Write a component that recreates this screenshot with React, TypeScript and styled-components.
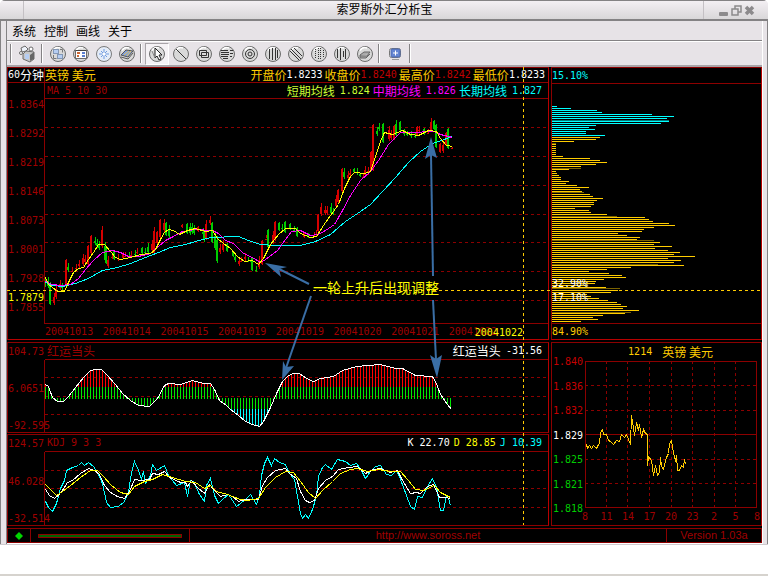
import React from "react";
import styled, { createGlobalStyle } from "styled-components";

const RED = "#8c0000";
const BRIGHT = "#b80000";
const DIM_TEXT = "#a00000";
const GOLD = "#ffcc00";
const YELLOW = "#ffff00";
const CYAN = "#00ffff";
const GREEN = "#00cc00";
const STEEL = "#3a6ea5";
const FACE = "#e7e3e7";

const GlobalStyle = createGlobalStyle`
  *, *::before, *::after { box-sizing: border-box; }
  body {
    margin: 0;
    background: #fff;
    font-family: "Noto Sans CJK SC", sans-serif;
    font-size: 12px;
    line-height: 14px;
  }
`;

/* ---------- window ---------- */

const Page = styled.div`
  min-height: 100vh;
  background: #fff;
  border-bottom: 2px solid #d6d3ce;
`;

const AppWindow = styled.div`
  display: flex;
  flex-direction: column;
  background: ${FACE};
  border-radius: 5px 5px 0 0;
  overflow: hidden;
  border-bottom: 1px solid #cfcbcf;
`;

const TitleBar = styled.header`
  display: flex;
  align-items: stretch;
  height: 21px;
  border-top: 1px solid #848284;
  border-bottom: 2px solid #848284;
  background: linear-gradient(#f3eff3, #d9d7d9);
`;

const TitleEdge = styled.div<{ $side: "left" | "right" }>`
  display: flex;
  align-items: center;
  width: ${(p) => (p.$side === "left" ? 24 : 65)}px;
  padding-left: ${(p) => (p.$side === "left" ? 0 : 14)}px;
  gap: 2px;
  border-${(p) => (p.$side === "left" ? "right" : "left")}: 1px solid #c4c0c4;
`;

const Title = styled.h1`
  flex: 1;
  margin: 0;
  padding-left: 42px;
  font-size: 12px;
  font-weight: 400;
  line-height: 16px;
  text-align: center;
  color: #000;
`;

const WindowButton = styled.button`
  width: 11px;
  height: 12px;
  padding: 0;
  border: 0;
  background: none;
  svg { display: block; }
`;

const Frame = styled.div`
  border: solid #848284;
  border-width: 0 1px;
  padding: 0 4px 0 5px;
`;

const Client = styled.div`
  border-left: 1px solid #848284;
  border-right: 1px solid #fff;
`;

const MenuBar = styled.nav`
  display: flex;
  align-items: center;
  gap: 8px;
  height: 20px;
  padding-left: 5px;
  border-bottom: 1px solid #848284;
`;

const MenuItem = styled.button`
  padding: 0;
  border: 0;
  background: none;
  font: inherit;
  line-height: 18px;
  color: #000;
`;

const ToolBar = styled.div`
  display: flex;
  align-items: center;
  height: 26px;
  padding-left: 1px;
  border-top: 1px solid #fff;
  border-bottom: 2px solid #a8a4a8;
`;

const ToolSeparator = styled.div`
  width: 2px;
  height: 19px;
  margin: 0 3px 0 2px;
  background: #848284;
  border-right: 1px solid #fff;
`;

const ToolButton = styled.button<{ $pressed?: boolean; $wide?: boolean }>`
  display: flex;
  align-items: center;
  justify-content: center;
  width: ${(p) => (p.$wide ? 24 : 23)}px;
  height: 22px;
  padding: 0;
  border: 1px solid;
  border-color: ${(p) => (p.$pressed ? "#a8a4a8 #fff #fff #a8a4a8" : "transparent")};
  background: ${(p) => (p.$pressed ? "#f5f2f5" : "none")};
`;

/* ---------- workspace ---------- */

const Workspace = styled.main`
  background: #000;
  border-bottom: 1px solid #fff;
`;

const Panes = styled.div`
  position: relative;
  display: grid;
  grid-template-columns: minmax(0, 542fr) minmax(0, 211fr);
  gap: 2px;
  align-items: stretch;
`;

const Column = styled.div`
  display: flex;
  flex-direction: column;
  min-width: 0;
`;

const Panel = styled.section<{ $gap?: number; $edge?: string }>`
  position: relative;
  display: flex;
  flex-direction: column;
  margin-top: ${(p) => p.$gap ?? 0}px;
  border: 1px solid ${RED};
  border-right-color: ${BRIGHT};
  border-bottom-color: ${(p) => p.$edge ?? RED};
`;

const Num = styled.span<{ $c?: string }>`
  font-family: "DejaVu Sans Mono", "Liberation Mono", monospace;
  font-size: 10px;
  line-height: 12px;
  white-space: pre;
  color: ${(p) => p.$c ?? DIM_TEXT};
`;

const Cn = styled.span<{ $c?: string }>`
  font-size: 12px;
  line-height: 14px;
  white-space: pre;
  color: ${(p) => p.$c ?? DIM_TEXT};
`;

const HeaderRow = styled.div`
  display: grid;
  grid-template-columns: 37px minmax(0, 1fr);
  height: 15px;
  border-bottom: 1px solid ${RED};
`;

const Period = styled.div`
  display: flex;
  align-items: center;
  border-right: 1px solid ${RED};
`;

const Split = styled.div<{ $h?: number; $line?: boolean; $left?: number; $right?: number }>`
  display: flex;
  align-items: center;
  justify-content: space-between;
  height: ${(p) => p.$h ?? 14}px;
  padding: 0 ${(p) => p.$right ?? 6}px 0 ${(p) => p.$left ?? 2}px;
  border-bottom: ${(p) => (p.$line ? `1px solid ${RED}` : "0")};
`;

const Readings = styled.div<{ $gap: number }>`
  display: flex;
  align-items: center;
  gap: ${(p) => p.$gap}px;
`;

const Reading = styled.span<{ $gap?: number }>`
  display: flex;
  align-items: center;
  gap: ${(p) => p.$gap ?? 0}px;
`;

const PlotBody = styled.div`
  display: grid;
  grid-template-columns: 36px minmax(0, 1fr);
`;

const Axis = styled.div<{ $top: number; $bottom: number }>`
  display: flex;
  flex-direction: column;
  justify-content: space-between;
  padding: ${(p) => p.$top}px 0 ${(p) => p.$bottom}px;
`;

const PlotArea = styled.div<{ $full?: boolean }>`
  min-width: 0;
  padding-left: ${(p) => (p.$full ? 0 : 1)}px;
  border-left: ${(p) => (p.$full ? `1px solid ${RED}` : "0")};
`;

const PlotFrame = styled.div<{ $full?: boolean; $closed?: boolean }>`
  margin-left: ${(p) => (p.$full ? 0 : -1)}px;
  border-left: ${(p) => (p.$full ? "0" : `1px solid ${RED}`)};
  border-bottom: ${(p) => (p.$closed ? `1px solid ${RED}` : "0")};
`;

const Plot = styled.svg<{ $h: number }>`
  display: block;
  width: 100%;
  height: ${(p) => p.$h}px;
`;

const Dates = styled.div`
  display: flex;
  align-items: center;
  justify-content: space-between;
  height: 15px;
  margin: 0 51px 0 37px;
`;

const CursorPrice = styled.div`
  position: absolute;
  left: 0;
  bottom: 35px;
  line-height: 12px;
`;

const CursorDate = styled.div`
  position: absolute;
  right: 25px;
  bottom: 0;
  height: 15px;
  line-height: 14px;
`;

const ShareRow = styled.div<{ $line?: boolean }>`
  display: flex;
  align-items: center;
  height: ${(p) => (p.$line ? 16 : 15)}px;
  border-bottom: ${(p) => (p.$line ? `1px solid ${RED}` : "0")};
`;

const ShareSplit = styled.div`
  position: absolute;
  left: 0;
  bottom: 35px;
  display: flex;
  flex-direction: column;
  gap: 2px;
`;

const DayTitle = styled.h2`
  display: flex;
  align-items: center;
  justify-content: center;
  gap: 10px;
  height: 18px;
  margin: 0;
  padding-left: 28px;
  font-weight: 400;
`;

const DayBody = styled.div`
  display: grid;
  grid-template-columns: 33px minmax(0, 1fr);
  padding-right: 4px;
`;

const DayAxis = styled.div`
  display: flex;
  flex-direction: column;
  justify-content: space-between;
  margin: -5px 0 -7px;
  padding-left: 1px;
`;

const Hours = styled.div`
  display: flex;
  justify-content: space-between;
  height: 17px;
  margin: 0 -2px 0 27px;
  padding-top: 3px;
`;

const Hour = styled(Num)`
  width: 12px;
  text-align: center;
`;

const Overlay = styled.svg`
  position: absolute;
  inset: 0;
  width: 100%;
  height: 100%;
  pointer-events: none;
`;

const Note = styled.div`
  position: absolute;
  top: 211px;
  left: 306px;
  font-size: 14px;
  line-height: 18px;
  white-space: nowrap;
  color: ${YELLOW};
`;

const StatusBar = styled.footer`
  display: flex;
  align-items: stretch;
  height: 15px;
  margin-top: 2px;
  border: 1px solid ${RED};
`;

const StatusCell = styled.div<{ $w?: number; $last?: boolean }>`
  display: flex;
  align-items: center;
  justify-content: center;
  flex: ${(p) => (p.$w ? `0 0 ${p.$w}px` : "1")};
  padding: 0 7px;
  border-right: ${(p) => (p.$last ? "0" : `1px solid ${RED}`)};
  font-family: "Liberation Sans", sans-serif;
  font-size: 11px;
  line-height: 13px;
  color: ${DIM_TEXT};
`;

const StatusLink = styled.a`
  color: inherit;
  text-decoration: none;
`;

const LoadBar = styled.div`
  width: 100%;
  height: 4px;
  border: 1px solid ${RED};
  background: #006300;
`;

/* ---------- data ---------- */

const shortMa =
  "45,277 48,284 52,287 57,291 64,291 68,282 73,272 78,268 83,267 88,259 93,252 98,244 104,244 110,251 115,257 120,259 130,257 140,254 150,253 155,249 160,239 164,232 168,229 173,230 179,234 187,230 195,228 205,231 212,230 217,238 223,243 230,248 237,256 244,261 252,260 258,264 263,258 270,244 278,234 285,228 295,228 300,233 310,237 316,236 323,225 330,215 338,204 344,188 350,176 354,172 364,173 370,171 375,156 380,141 384,132 392,134 402,130 410,134 418,135 428,130 436,131 440,138 446,145 452,146";
const midMa =
  "45,281 52,284 60,285 70,284 78,278 85,269 93,260 102,252 112,250 120,252 128,256 138,256 150,253 158,246 165,240 173,236 182,231 195,229 212,230 218,233 225,240 233,243 243,253 252,257 260,262 265,259 277,250 285,239 291,231 300,230 310,235 318,234 325,230 334,224 342,210 350,195 360,180 370,171 378,160 388,144 400,132 415,132 428,131 434,131 440,134 452,137";
const longMa =
  "45,282 52,285 62,286 75,283 88,278 102,270 117,267 130,263 145,257 158,252 170,247 185,244 195,241 210,237 238,236 248,240 260,244 275,245 300,245 315,241 330,234 345,221 360,211 370,204 382,191 395,177 408,162 420,151 432,143 441,140 452,136";

// x, high, low, rising (1) or falling (0), body width
type Candle = [number, number, number, number, number];
const candles: Candle[] = [
  [45, 277, 287, 0, 1], [48, 277, 288, 0, 1], [50, 282, 305, 0, 2], [54, 293, 305, 1, 1], [56, 285, 299, 1, 1],
  [60, 280, 290, 1, 1], [62, 283, 290, 0, 1], [66, 259, 287, 1, 2], [68, 263, 272, 0, 1], [72, 267, 272, 1, 1],
  [76, 264, 270, 1, 1], [79, 260, 268, 1, 1], [83, 254, 266, 1, 1], [85, 255, 264, 1, 1], [88, 245, 265, 1, 2],
  [91, 235, 254, 1, 2], [95, 237, 245, 0, 1], [97, 239, 248, 0, 1], [99, 241, 250, 0, 1], [102, 226, 248, 1, 1],
  [105, 242, 262, 0, 1], [106, 246, 264, 0, 2], [108, 256, 268, 1, 1], [112, 253, 259, 1, 1], [114, 250, 260, 0, 2],
  [118, 254, 261, 1, 1], [123, 252, 259, 1, 2], [125, 252, 257, 1, 1], [129, 252, 257, 0, 1], [131, 251, 257, 1, 1],
  [135, 250, 256, 0, 1], [137, 248, 254, 1, 1], [142, 247, 254, 0, 2], [145, 248, 255, 0, 1], [148, 243, 254, 0, 1],
  [152, 240, 252, 1, 1], [154, 227, 255, 1, 1], [157, 231, 244, 1, 2], [160, 219, 238, 1, 2], [164, 219, 232, 1, 1],
  [166, 222, 236, 0, 2], [169, 225, 238, 0, 1], [182, 224, 228, 1, 2], [187, 223, 234, 0, 2], [190, 223, 235, 0, 1],
  [192, 223, 234, 0, 1], [194, 225, 235, 0, 1], [198, 226, 232, 1, 2], [203, 228, 236, 0, 1], [204, 230, 242, 0, 1],
  [206, 220, 240, 1, 1], [210, 216, 225, 1, 1], [212, 222, 243, 0, 2], [215, 232, 250, 0, 1], [217, 236, 263, 0, 1],
  [220, 244, 254, 1, 1], [223, 240, 252, 1, 1], [227, 243, 252, 0, 2], [233, 251, 257, 0, 2], [235, 253, 262, 0, 1],
  [239, 257, 266, 1, 1], [241, 257, 262, 1, 1], [245, 253, 261, 1, 1], [248, 257, 262, 0, 1], [251, 257, 264, 0, 1],
  [252, 257, 271, 0, 2], [256, 266, 272, 0, 1], [259, 256, 269, 1, 1], [262, 240, 265, 1, 2], [266, 235, 238, 1, 1],
  [268, 229, 248, 0, 2], [273, 231, 244, 1, 1], [275, 221, 241, 1, 2], [279, 222, 231, 0, 2], [282, 224, 230, 0, 1],
  [285, 221, 233, 0, 2], [290, 223, 230, 0, 2], [294, 226, 232, 0, 1], [297, 227, 237, 0, 2], [304, 232, 238, 1, 2],
  [308, 233, 238, 0, 2], [314, 232, 237, 1, 1], [316, 230, 236, 1, 1], [318, 214, 232, 1, 2], [321, 203, 216, 1, 1],
  [325, 206, 215, 1, 1], [327, 206, 215, 1, 1], [331, 203, 215, 0, 1], [333, 208, 215, 0, 1], [336, 195, 208, 1, 1],
  [338, 189, 203, 1, 2], [342, 168, 192, 1, 2], [344, 168, 179, 0, 1], [348, 171, 180, 1, 1], [350, 169, 177, 1, 1],
  [354, 168, 173, 0, 2], [357, 168, 175, 0, 1], [360, 173, 177, 0, 2], [363, 173, 177, 1, 1], [365, 166, 177, 1, 1],
  [368, 167, 175, 1, 1], [371, 151, 171, 1, 2], [373, 124, 171, 1, 2], [377, 127, 136, 0, 1], [379, 123, 131, 0, 1],
  [383, 123, 143, 0, 2], [389, 126, 141, 1, 1], [391, 130, 140, 1, 1], [394, 125, 140, 1, 2], [396, 120, 137, 0, 1],
  [400, 121, 131, 0, 2], [404, 129, 136, 0, 1], [407, 131, 136, 0, 2], [411, 131, 138, 0, 1], [415, 132, 138, 0, 1],
  [417, 126, 136, 1, 2], [419, 126, 133, 1, 1], [424, 128, 135, 0, 2], [428, 129, 134, 1, 1], [431, 118, 132, 1, 1],
  [434, 120, 130, 0, 2], [436, 124, 148, 0, 2], [440, 143, 153, 1, 2], [443, 141, 153, 1, 1], [446, 132, 146, 1, 2],
  [448, 128, 149, 0, 2], [452, 147, 149, 1, 2],
];

// first row, colour, bar lengths on every second row
const shares: [number, string, number[]][] = [
  [106, CYAN, [6, 20, 46, 51, 101, 123, 116]],
  [120, "#007b7b", [118]],
  [121, CYAN, [118, 110, 45, 38, 44, 35, 35, 54]],
  [137, GOLD, [49, 45, 23]],
  [143, "#7b6300", [5]],
  [144, GOLD, [5, 5, 5, 5, 5, 5, 12, 39, 49, 56, 45, 30]],
  [168, "#7b6300", [30]],
  [169, GOLD, [18, 5, 6, 8, 10, 10, 18, 15, 26, 38, 29, 31]],
  [192, "#7b6300", [33]],
  [194, GOLD, [39, 42, 52, 46, 43, 43, 40, 24, 38, 40, 56]],
  [216, "#7b6300", [66]],
  [217, GOLD, [94, 98, 102, 118, 124, 103, 93, 91, 67, 76, 89, 86]],
  [240, "#7b6300", [103]],
  [242, GOLD, [109, 103, 121, 104, 117, 129, 123, 144, 117, 130, 123]],
  [264, "#7b6300", [107]],
  [265, GOLD, [133, 80, 56, 38, 58, 71, 75, 53, 45, 44, 36, 55]],
  [288, "#7b6300", [69]],
  [290, GOLD, [67, 60, 36, 40, 48, 57, 66, 70, 76, 72, 88]],
  [312, "#7b6300", [80]],
  [313, GOLD, [74, 52, 42, 47, 30]],
];

const luck: [number, number][] = [
  [45, 384], [48, 386], [52, 397], [57, 401], [63, 401], [68, 396], [75, 387], [83, 377], [90, 370], [95, 369],
  [101, 369], [107, 375], [115, 384], [122, 393], [130, 400], [138, 405], [149, 406], [157, 398], [164, 385],
  [168, 383], [180, 384], [192, 380], [203, 383], [210, 383], [214, 389], [219, 400], [226, 405], [230, 409],
  [238, 415], [245, 421], [252, 424], [259, 426], [263, 421], [270, 407], [276, 393], [282, 381], [288, 375],
  [293, 373], [299, 373], [306, 378], [313, 381], [320, 378], [333, 376], [342, 370], [356, 366], [380, 364],
  [395, 368], [402, 368], [415, 375], [432, 376], [436, 383], [440, 394], [447, 404], [451, 409],
];

const kLine =
  "45,489 49,495 54,498 60,493 67,482 72,480 80,473 88,468 94,470 99,474 104,485 110,492 117,496 124,498 129,491 134,479 141,480 149,479 152,473 158,474 164,471 169,477 180,482 185,482 187,486 191,480 197,487 204,493 209,484 214,490 220,496 227,494 232,496 238,501 245,499 258,499 262,485 267,477 275,470 285,468 289,473 296,478 300,491 305,500 309,502 314,500 318,488 325,480 332,476 338,469 348,467 357,466 365,473 373,469 380,468 390,472 397,470 402,480 410,493 416,492 420,493 427,486 433,484 439,497 445,497 450,498";
const dLine =
  "45,484 50,489 56,495 62,491 70,485 80,477 90,470 97,470 103,476 111,485 120,492 128,494 134,486 144,481 152,479 162,474 172,477 185,481 195,482 204,488 210,485 216,491 227,494 240,499 247,500 258,498 265,487 275,477 285,471 293,472 300,481 308,492 315,498 322,490 332,481 340,473 350,469 357,468 367,471 378,469 390,471 400,471 408,480 415,489 423,490 434,485 440,492 450,497";
const jLine =
  "45,501 48,507 52,511 56,503 60,488 64,480 66,470 72,467 78,465 81,462 84,465 88,462 93,466 97,472 102,483 106,502 110,507 118,506 124,501 128,492 131,472 134,461 138,470 141,479 143,471 145,483 150,475 152,464 156,470 164,465 168,475 176,485 184,482 187,496 190,480 193,481 199,494 204,501 206,485 210,478 214,495 218,503 223,498 228,494 236,506 245,499 250,494 256,504 259,495 261,475 264,463 267,457 271,465 274,458 279,462 285,464 289,473 294,479 297,496 300,513 302,518 305,514 308,518 312,509 316,496 318,476 322,467 325,464 331,469 337,459 345,461 350,465 356,463 361,470 365,478 370,471 375,466 380,465 386,474 391,475 396,470 400,479 406,495 410,506 414,509 417,496 422,497 427,486 432,478 436,487 440,510 443,510 446,495 448,498 450,505";
const dayLine =
  "586,444 587,448 589,445 591,448 593,445 596,448 598,444 599,443 600,432 602,429 603,434 606,434 608,440 610,441 613,444 616,440 619,441 621,434 624,437 626,434 628,439 630,444 631,415 632,421 634,435 636,422 638,430 639,424 641,437 643,429 645,433 647,434 647,465 648,456 651,460 653,475 655,465 657,475 659,472 660,457 661,466 663,469 666,457 668,453 669,443 671,440 673,452 675,461 676,455 677,470 679,470 681,465 683,467 684,459 685,464";

/* ---------- chart pieces ---------- */

const HGrid = ({ ys, x1, x2 }: { ys: number[]; x1: number; x2: number }) => (
  <g fill="none" stroke={RED} strokeDasharray="3 3" shapeRendering="crispEdges">
    {ys.map((y) => (
      <path key={y} d={`M${x1} ${y + 0.5}H${x2}`} />
    ))}
  </g>
);

const Curve = ({ points, color }: { points: string; color: string }) => (
  <polyline points={points} transform="translate(0.5 0.5)" fill="none" stroke={color} shapeRendering="crispEdges" />
);

const PricePlot = () => (
  <Plot $h={224} viewBox="45 99 503 224" preserveAspectRatio="none" role="img" aria-label="价格走势">
    <HGrid ys={[127, 156, 185, 214, 242, 271, 300]} x1={45} x2={548} />
    <g shapeRendering="crispEdges">
      {candles.map(([x, hi, lo, up, w]) => (
        <g key={x} fill={up ? "#d60000" : GREEN}>
          <rect x={x} y={hi} width={1} height={lo - hi} />
          <rect x={x - 1} y={w > 1 ? hi + 1 : hi + 4} width={2} height={Math.max(1, lo - hi - (w > 1 ? 2 : 6))} />
        </g>
      ))}
    </g>
    <Curve points={longMa} color={CYAN} />
    <Curve points={midMa} color="#ff00ff" />
    <Curve points={shortMa} color={YELLOW} />
  </Plot>
);

const SharePlot = () => (
  <Plot $h={239} viewBox="552 84 209 239" preserveAspectRatio="none" role="img" aria-label="成交分布">
    <g shapeRendering="crispEdges">
      {shares.map(([top, color, lengths]) =>
        lengths.map((length, i) => (
          <rect key={`${top}-${i}`} x={551} y={top + i * 2} width={length} height={1} fill={color} />
        ))
      )}
    </g>
  </Plot>
);

const levelAt = (x: number) => {
  const i = Math.max(1, luck.findIndex(([px]) => px >= x));
  const [x0, y0] = luck[i - 1];
  const [x1, y1] = luck[i];
  return Math.round(y0 + ((y1 - y0) * (x - x0)) / (x1 - x0));
};

const LuckPlot = () => {
  const xs = Array.from({ length: 136 }, (_, i) => 45 + i * 3);
  return (
    <Plot $h={72} viewBox="45 360 503 72" preserveAspectRatio="none" role="img" aria-label="红运当头">
      <HGrid ys={[377, 396, 414]} x1={45} x2={548} />
      <g shapeRendering="crispEdges">
        {xs.map((x) => {
          const y = levelAt(x);
          const greenTop = y < 398 ? Math.max(y, 387) : 398;
          const greenEnd = y < 398 ? 399 : Math.min(y, 409);
          return (
            <g key={x}>
              {y < 387 && <rect x={x} y={y} width={1} height={387 - y} fill="#ff0000" />}
              <rect x={x} y={greenTop} width={1} height={greenEnd - greenTop} fill="#00e600" />
              {y > 409 && <rect x={x} y={409} width={1} height={y - 409} fill={CYAN} />}
            </g>
          );
        })}
      </g>
      <Curve points={luck.map((p) => p.join(",")).join(" ")} color="#fff" />
    </Plot>
  );
};

const KdjPlot = () => (
  <Plot $h={73} viewBox="45 452 503 73" preserveAspectRatio="none" role="img" aria-label="KDJ">
    <HGrid ys={[470, 488, 507]} x1={45} x2={548} />
    <Curve points={jLine} color={CYAN} />
    <Curve points={kLine} color="#fff" />
    <Curve points={dLine} color={YELLOW} />
  </Plot>
);

const DayPlot = () => (
  <Plot $h={147} viewBox="585 361 172 147" preserveAspectRatio="none" role="img" aria-label="日内走势">
    <HGrid ys={[385, 410, 459, 483]} x1={585} x2={757} />
    <g stroke={RED} fill="none" strokeDasharray="3 3" shapeRendering="crispEdges">
      {[606, 627, 649, 671, 692, 714, 735].map((x) => (
        <path key={x} d={`M${x + 0.5} 361V508`} />
      ))}
    </g>
    <path d="M585.5 361.5H756.5V507.5H585.5ZM585 434.5H757" fill="none" stroke={RED} shapeRendering="crispEdges" />
    <Curve points={dayLine} color={GOLD} />
  </Plot>
);

/* ---------- icons ---------- */

const Disc = ({ children }: { children?: React.ReactNode }) => (
  <svg width="18" height="18" viewBox="0 0 18 18">
    <circle cx="9" cy="9" r="7.5" fill="#d9d9d9" stroke="#6b6b6b" />
    <path d="M4 5.5A6 6 0 0 1 11 3" fill="none" stroke="#fff" strokeWidth="1.5" />
    <g fill="none" stroke="#333">{children}</g>
  </svg>
);

const Camera = () => (
  <svg width="18" height="18" viewBox="0 0 18 18">
    <path d="M5 9l3-3 8 1v7l-4 3-7-3z" fill="#c6c6c6" stroke="#6b6b6b" />
    <path d="M12 10v6l4-2V7z" fill="#666" />
    <path d="M3 3l4-2 3 3-2 2-4 1z" fill="#eef2fa" stroke="#6b6b6b" />
    <rect x="7" y="9" width="4" height="5" fill="#b5cdf2" />
    <circle cx="13" cy="4" r="2" fill="#fff" stroke="#6b6b6b" />
    <circle cx="3" cy="8" r="1.5" fill="#fff" stroke="#6b6b6b" />
  </svg>
);

const Panels = () => (
  <Disc>
    <rect x="4.5" y="4.5" width="5" height="4" fill="#b5cdf2" stroke="#8397b5" />
    <rect x="8.5" y="9.5" width="5" height="4" fill="#b5cdf2" stroke="#8397b5" />
    <path d="M11 4.500h2.500v3M4.500 10v3.500h3" stroke="#777" />
  </Disc>
);

const Calendar = () => (
  <Disc>
    <rect x="3.5" y="5.5" width="11" height="8" fill="#fff" stroke="#6b6b6b" />
    <path d="M4 5.5h10" stroke="#444" />
    <path d="M5 8h3M5 11h2" stroke="#c63" strokeWidth="2" />
    <path d="M10 8h3M10 11h3" stroke="#5b7fd0" strokeWidth="2" />
  </Disc>
);

const Star = () => (
  <svg width="18" height="18" viewBox="0 0 18 18">
    <circle cx="9" cy="9" r="7.5" fill="#e4ecf8" stroke="#7a7a7a" />
    <path d="M9 4v10M4 9h10M6 6l6 6M12 6l-6 6" stroke="#6f9be0" fill="none" />
    <circle cx="9" cy="9" r="1.5" fill="#fff" />
  </svg>
);

const Book = () => (
  <Disc>
    <path d="M3 10l5-5 7 1-5 6z" fill="#7f9fdc" stroke="#555" />
    <path d="M3 12l7 2 5-6" fill="none" stroke="#555" />
    <path d="M6 10l5-4M9 11l4-5" stroke="#e6c35a" />
  </Disc>
);

const Pointer = () => (
  <Disc>
    <path d="M7 3v10l2-2 2 4 2-1-2-4h3z" fill="#fff" stroke="#222" />
    <path d="M4 6l3 7" stroke="#888" />
  </Disc>
);

const MagnifyPlus = () => (
  <svg width="18" height="18" viewBox="0 0 18 18">
    <rect x="3.5" y="3.5" width="11" height="9" rx="2" fill="#fff" stroke="#777" />
    <rect x="5" y="4" width="9" height="8" rx="1" fill="#6485d3" stroke="#4c68ad" />
    <path d="M9.5 5.5v5M7 8h5" stroke="#fff" fill="none" />
    <path d="M6 14.5h7" stroke="#999" />
  </svg>
);

const drawingTools: [string, React.ReactNode][] = [
  ["直线", <path key="a" d="M4 4l10 10" />],
  ["矩形", <path key="b" d="M4.5 5.5h7v5h-7zM6.5 7.5h7v5h-7z" />],
  ["百分比线", <path key="c" d="M3 5.5h7M3 7.5h8M3 9.5h8M3 11.5h7M5 13.5h5M12 5.5h3M12 8.5h3M12 11.5h2" />],
  ["圆", <g key="d"><circle cx="9" cy="9" r="4.5" /><circle cx="9" cy="9" r="2" /></g>],
  ["周期线", <path key="e" d="M5.5 4v10M8.5 3v12M11.5 3v12M13.5 5v8" />],
  ["平行线", <path key="f" d="M3 6l9 9M4 4l10 10M7 3l8 8" />],
  ["黄金分割", <path key="g" d="M5.5 4v10M8.5 3v12M10.5 3v12M13.5 5v8" strokeDasharray="1 1" />],
  ["时间线", <path key="h" d="M4.5 4v9M7.5 3v12M12.5 4v10M10.5 6v6" />],
  ["橡皮", <path key="i" d="M4 10l4-3h6l-3 4H4zM4 11v2h6l4-4" fill="#aaa" stroke="#666" />],
];

const OHLC: [string, string, string][] = [
  ["开盘价", "1.8233", "#fff"],
  ["收盘价", "1.8240", "#c00000"],
  ["最高价", "1.8242", "#c00000"],
  ["最低价", "1.8233", "#fff"],
];

const AVERAGES: [string, string, string][] = [
  ["短期均线", "1.824", "#ccff33"],
  ["中期均线", "1.826", "#ff00ff"],
  ["长期均线", "1.827", CYAN],
];

export default function App() {
  return (
    <Page>
      <GlobalStyle />
      <AppWindow>
        <TitleBar>
          <TitleEdge $side="left" />
          <Title>索罗斯外汇分析宝</Title>
          <TitleEdge $side="right">
            <WindowButton aria-label="最小化">
              <svg width="11" height="12" viewBox="0 0 11 12"><rect x="1" y="8" width="9" height="4" rx="1" fill="#8c8a8c" /></svg>
            </WindowButton>
            <WindowButton aria-label="还原">
              <svg width="11" height="12" viewBox="0 0 11 12" fill="none" stroke="#8c8a8c" strokeWidth="1.5">
                <path d="M4 5V2h6v6H7" />
                <path d="M1 5h6v6H1z" />
              </svg>
            </WindowButton>
            <WindowButton aria-label="关闭">
              <svg width="11" height="12" viewBox="0 0 11 12"><path d="M2 3l7 7M9 3l-7 7" stroke="#8c8a8c" strokeWidth="3.5" /></svg>
            </WindowButton>
          </TitleEdge>
        </TitleBar>

        <Frame>
          <Client>
            <MenuBar>
              {["系统", "控制", "画线", "关于"].map((m) => (
                <MenuItem key={m}>{m}</MenuItem>
              ))}
            </MenuBar>

            <ToolBar>
              <ToolSeparator />
              <ToolButton $wide aria-label="截图"><Camera /></ToolButton>
              <ToolSeparator />
              <ToolButton aria-label="窗口"><Panels /></ToolButton>
              <ToolButton aria-label="日历"><Calendar /></ToolButton>
              <ToolButton aria-label="设置"><Star /></ToolButton>
              <ToolButton aria-label="手册"><Book /></ToolButton>
              <ToolSeparator />
              <ToolButton $pressed $wide aria-label="选择" aria-pressed="true"><Pointer /></ToolButton>
              {drawingTools.map(([label, icon]) => (
                <ToolButton key={label} aria-label={label}><Disc>{icon}</Disc></ToolButton>
              ))}
              <ToolSeparator />
              <ToolButton $wide aria-label="放大"><MagnifyPlus /></ToolButton>
              <ToolSeparator />
            </ToolBar>

            <Workspace>
              <Panes>
                <Column>
                  <Panel $edge={BRIGHT}>
                    <HeaderRow>
                      <Period>
                        <Num $c="#fff">60</Num>
                        <Cn $c="#fff">分钟</Cn>
                      </Period>
                      <Split $left={0} $right={3}>
                        <Cn $c={GOLD}>英镑 美元</Cn>
                        <Readings $gap={2}>
                          {OHLC.map(([name, value, color]) => (
                            <Reading key={name}>
                              <Cn $c={GOLD}>{name}</Cn>
                              <Num $c={color}>{value}</Num>
                            </Reading>
                          ))}
                        </Readings>
                      </Split>
                    </HeaderRow>
                    <PlotBody>
                      <Axis $top={16} $bottom={10}>
                        {["1.8364", "1.8292", "1.8219", "1.8146", "1.8073", "1.8001", "1.7928", "1.7855"].map((v) => (
                          <Num key={v}>{v}</Num>
                        ))}
                      </Axis>
                      <PlotArea $full>
                        <Split $h={16} $line>
                          <Num>MA 5 10 30</Num>
                          <Readings $gap={3}>
                            {AVERAGES.map(([name, value, color]) => (
                              <Reading key={name} $gap={5}>
                                <Cn $c={color}>{name}</Cn>
                                <Num $c={color}>{value}</Num>
                              </Reading>
                            ))}
                          </Readings>
                        </Split>
                        <PlotFrame $full $closed>
                          <PricePlot />
                        </PlotFrame>
                      </PlotArea>
                    </PlotBody>
                    <Dates>
                      {["20041013", "20041014", "20041015", "20041019", "20041019", "20041020", "20041021", "20041022"].map((d, i) => (
                        <Num key={i}>{d}</Num>
                      ))}
                    </Dates>
                    <CursorPrice><Num $c={YELLOW}>1.7879</Num></CursorPrice>
                    <CursorDate><Num $c={YELLOW}>20041022</Num></CursorDate>
                  </Panel>

                  <Panel $gap={2}>
                    <PlotBody>
                      <Axis $top={3} $bottom={0}>
                        <Num>104.73</Num>
                        <Num>6.0651</Num>
                        <Num>-92.595</Num>
                      </Axis>
                      <PlotArea>
                        <Split $h={17} $line>
                          <Cn>红运当头</Cn>
                          <Reading $gap={5}>
                            <Cn $c="#fff">红运当头</Cn>
                            <Num $c="#fff">-31.56</Num>
                          </Reading>
                        </Split>
                        <PlotFrame>
                          <LuckPlot />
                        </PlotFrame>
                      </PlotArea>
                    </PlotBody>
                  </Panel>

                  <Panel $gap={1}>
                    <PlotBody>
                      <Axis $top={3} $bottom={0}>
                        <Num>124.57</Num>
                        <Num>46.028</Num>
                        <Num>-32.514</Num>
                      </Axis>
                      <PlotArea>
                        <Split $h={17} $line>
                          <Num>KDJ 9 3 3</Num>
                          <Readings $gap={4}>
                            <Num $c="#fff">K 22.70</Num>
                            <Num $c={YELLOW}>D 28.85</Num>
                            <Num $c={CYAN}>J 10.39</Num>
                          </Readings>
                        </Split>
                        <PlotFrame>
                          <KdjPlot />
                        </PlotFrame>
                      </PlotArea>
                    </PlotBody>
                  </Panel>
                </Column>

                <Column>
                  <Panel $edge={BRIGHT}>
                    <ShareRow $line><Num $c={CYAN}>15.10%</Num></ShareRow>
                    <PlotFrame $full $closed>
                      <SharePlot />
                    </PlotFrame>
                    <ShareRow><Num $c={GOLD}>84.90%</Num></ShareRow>
                    <ShareSplit>
                      <Num $c="#fff">32.90%</Num>
                      <Num $c="#fff">17.10%</Num>
                    </ShareSplit>
                  </Panel>

                  <Panel $gap={2}>
                    <DayTitle>
                      <Num $c={GOLD}>1214</Num>
                      <Cn $c={GOLD}>英镑 美元</Cn>
                    </DayTitle>
                    <DayBody>
                      <DayAxis>
                        {["1.840", "1.836", "1.832"].map((v) => <Num key={v} $c="#c60000">{v}</Num>)}
                        <Num $c="#fff">1.829</Num>
                        {["1.825", "1.821", "1.818"].map((v) => <Num key={v} $c={GREEN}>{v}</Num>)}
                      </DayAxis>
                      <DayPlot />
                    </DayBody>
                    <Hours>
                      {["8", "11", "14", "17", "20", "23", "2", "5", "8"].map((h, i) => <Hour key={i}>{h}</Hour>)}
                    </Hours>
                  </Panel>
                </Column>

                <Overlay viewBox="7 67 755 459" preserveAspectRatio="none">
                  <g fill="none" stroke={GOLD} strokeDasharray="3 3" shapeRendering="crispEdges">
                    <path d="M7 290.5H762" />
                    <path d="M523.5 67V525" />
                  </g>
                  <g fill="none" stroke={STEEL} strokeWidth="2">
                    <path d="M279 269L309 284" />
                    <path d="M311 296L286 368" />
                    <path d="M431 155L433 276" />
                    <path d="M433 300L436 360" />
                  </g>
                  <g fill={STEEL}>
                    <path d="M265 263L287 267L279 269L281 277Z" />
                    <path d="M282 380L283 361L286 367L294 366Z" />
                    <path d="M431 137L425 159L431 155L437 158Z" />
                    <path d="M437 378L430 355L436 359L442 355Z" />
                  </g>
                </Overlay>
                <Note>一轮上升后出现调整</Note>
              </Panes>

              <StatusBar>
                <StatusCell $w={22}>
                  <svg width="8" height="8" viewBox="0 0 8 8"><path d="M4 0L8 4L4 8L0 4Z" fill="#00d600" /></svg>
                </StatusCell>
                <StatusCell $w={159}>
                  <LoadBar role="progressbar" aria-label="数据接收" aria-valuenow={100} />
                </StatusCell>
                <StatusCell><StatusLink href="http://www.soross.net">http://www.soross.net</StatusLink></StatusCell>
                <StatusCell $w={94} $last>Version 1.03a</StatusCell>
              </StatusBar>
            </Workspace>
          </Client>
        </Frame>
      </AppWindow>
    </Page>
  );
}
